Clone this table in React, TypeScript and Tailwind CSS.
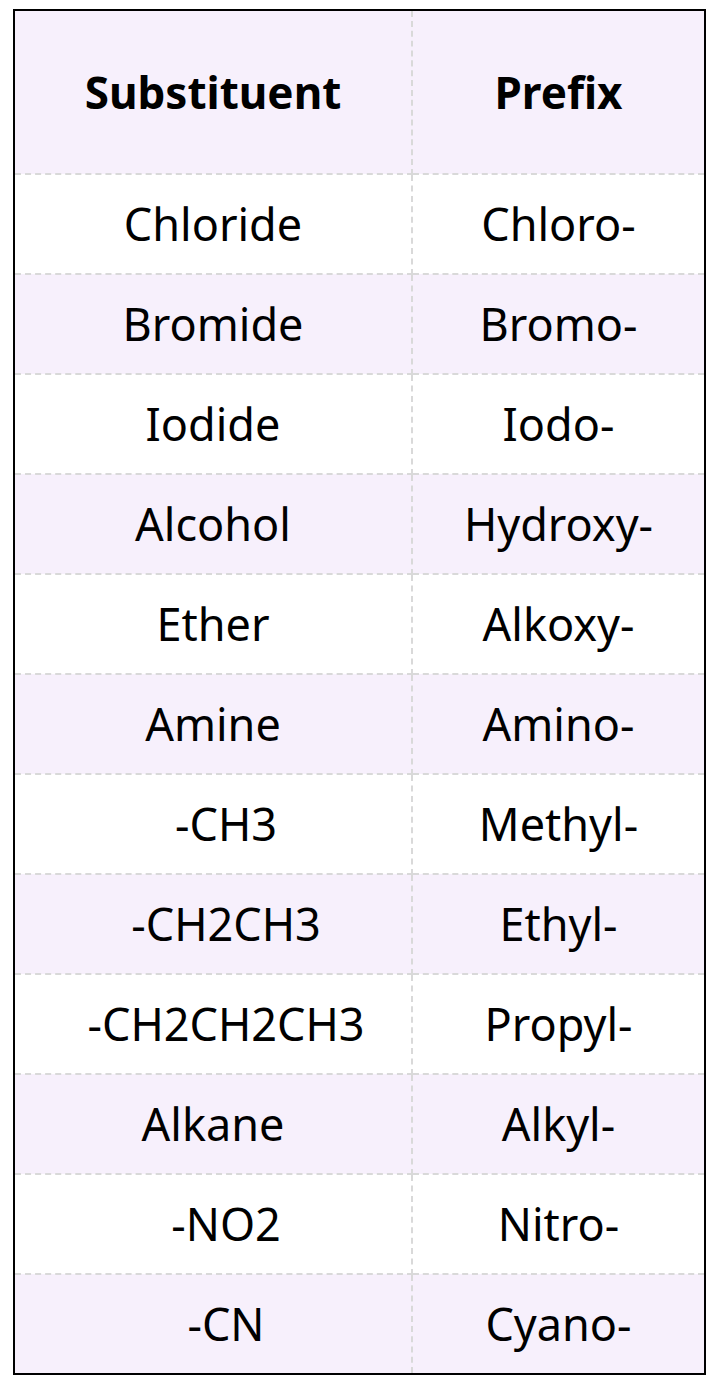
import React from "react";

const rows: [string, string, boolean][] = [
  ["Chloride", "Chloro-", false],
  ["Bromide", "Bromo-", false],
  ["Iodide", "Iodo-", false],
  ["Alcohol", "Hydroxy-", false],
  ["Ether", "Alkoxy-", false],
  ["Amine", "Amino-", false],
  ["-CH3", "Methyl-", true],
  ["-CH2CH3", "Ethyl-", true],
  ["-CH2CH2CH3", "Propyl-", true],
  ["Alkane", "Alkyl-", false],
  ["-NO2", "Nitro-", true],
  ["-CN", "Cyano-", true],
];

export default function App() {
  return (
    <div className="w-[718px] h-[1388px] bg-white pl-[13px] pt-[9px]" style={{ fontFamily: '"Noto Sans", "Open Sans", sans-serif' }}>
      <table className="w-[693px] border-collapse border-2 border-black text-black">
        <thead>
          <tr className="bg-[#f7f0fc]">
            <th className="h-[164px] w-[398px] border-r-2 border-b-2 border-dashed border-r-[#d9d9d9] border-b-[#d9d9d9] text-[44px] font-bold text-center align-middle">Substituent</th>
            <th className="h-[164px] border-b-2 border-dashed border-b-[#d9d9d9] text-[44px] font-bold text-center align-middle">Prefix</th>
          </tr>
        </thead>
        <tbody>
          {rows.map(([a, b, shift], i) => (
            <tr key={i} className={i % 2 === 1 ? "bg-[#f7f0fc]" : "bg-white"}>
              <td className={"h-[100px] border-r-2 border-b-2 border-dashed border-r-[#d9d9d9] border-b-[#d9d9d9] text-[45px] text-center align-middle " + (shift ? "pl-[26px]" : "")}>{a}</td>
              <td className="h-[100px] border-b-2 border-dashed border-b-[#d9d9d9] text-[45px] text-center align-middle">{b}</td>
            </tr>
          ))}
        </tbody>
      </table>
    </div>
  );
}
